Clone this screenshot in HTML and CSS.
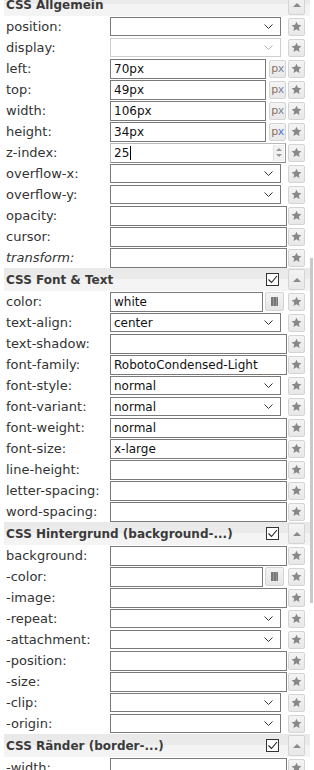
FILE: index.html
```html
<!DOCTYPE html>
<html lang="de">
<head>
<meta charset="UTF-8" />
<title>CSS Eigenschaften</title>
<link rel="stylesheet" href="styles.css">
</head>
<body>

<div class="panel">

  <!-- CSS Allgemein -->
  <section class="group first">
    <div class="group-head">
      <span class="title">CSS Allgemein</span>
      <button class="up"><svg width="8" height="4" viewBox="0 0 8 4"><polygon points="0,4 4,0 8,4" /></svg></button>
    </div>
    <div class="row"><span class="label">position:</span><div class="field sel"><span class="chev"></span></div><button class="star"></button></div>
    <div class="row"><span class="label">display:</span><div class="field sel disabled"><span class="chev"></span></div><button class="star"></button></div>
    <div class="row"><span class="label">left:</span><div class="field px">70px</div><span class="unit">p<i>x</i></span><button class="star"></button></div>
    <div class="row"><span class="label">top:</span><div class="field px">49px</div><span class="unit">p<i>x</i></span><button class="star"></button></div>
    <div class="row"><span class="label">width:</span><div class="field px">106px</div><span class="unit">p<i>x</i></span><button class="star"></button></div>
    <div class="row"><span class="label">height:</span><div class="field px">34px</div><span class="unit blue">p<i>x</i></span><button class="star"></button></div>
    <div class="row"><span class="label">z-index:</span><div class="field num focus">25<span class="caret"></span><span class="spin"><b class="a-up"></b><b class="a-down"></b></span></div><button class="star"></button></div>
    <div class="row"><span class="label">overflow-x:</span><div class="field sel"><span class="chev"></span></div><button class="star"></button></div>
    <div class="row"><span class="label">overflow-y:</span><div class="field sel"><span class="chev"></span></div><button class="star"></button></div>
    <div class="row"><span class="label">opacity:</span><div class="field"></div><button class="star"></button></div>
    <div class="row"><span class="label">cursor:</span><div class="field"></div><button class="star"></button></div>
    <div class="row"><span class="label em">transform:</span><div class="field"></div><button class="star"></button></div>
  </section>

  <!-- CSS Font & Text -->
  <section class="group">
    <div class="group-head">
      <span class="title">CSS Font &amp; Text</span>
      <span class="check"></span>
      <button class="up"><svg width="8" height="4" viewBox="0 0 8 4"><polygon points="0,4 4,0 8,4" /></svg></button>
    </div>
    <div class="row"><span class="label">color:</span><div class="field col">white</div><span class="picker"><b></b></span><button class="star"></button></div>
    <div class="row"><span class="label">text-align:</span><div class="field sel">center<span class="chev"></span></div><button class="star"></button></div>
    <div class="row"><span class="label">text-shadow:</span><div class="field"></div><button class="star"></button></div>
    <div class="row"><span class="label">font-family:</span><div class="field">RobotoCondensed-Light</div><button class="star"></button></div>
    <div class="row"><span class="label">font-style:</span><div class="field sel">normal<span class="chev"></span></div><button class="star"></button></div>
    <div class="row"><span class="label">font-variant:</span><div class="field sel">normal<span class="chev"></span></div><button class="star"></button></div>
    <div class="row"><span class="label">font-weight:</span><div class="field">normal</div><button class="star"></button></div>
    <div class="row"><span class="label">font-size:</span><div class="field">x-large</div><button class="star"></button></div>
    <div class="row"><span class="label">line-height:</span><div class="field"></div><button class="star"></button></div>
    <div class="row"><span class="label">letter-spacing:</span><div class="field"></div><button class="star"></button></div>
    <div class="row"><span class="label">word-spacing:</span><div class="field"></div><button class="star"></button></div>
  </section>

  <!-- CSS Hintergrund -->
  <section class="group">
    <div class="group-head">
      <span class="title">CSS Hintergrund (background-...)</span>
      <span class="check"></span>
      <button class="up"><svg width="8" height="4" viewBox="0 0 8 4"><polygon points="0,4 4,0 8,4" /></svg></button>
    </div>
    <div class="row"><span class="label">background:</span><div class="field"></div><button class="star"></button></div>
    <div class="row"><span class="label">-color:</span><div class="field col"></div><span class="picker"><b></b></span><button class="star"></button></div>
    <div class="row"><span class="label">-image:</span><div class="field"></div><button class="star"></button></div>
    <div class="row"><span class="label">-repeat:</span><div class="field sel"><span class="chev"></span></div><button class="star"></button></div>
    <div class="row"><span class="label">-attachment:</span><div class="field sel"><span class="chev"></span></div><button class="star"></button></div>
    <div class="row"><span class="label">-position:</span><div class="field"></div><button class="star"></button></div>
    <div class="row"><span class="label">-size:</span><div class="field"></div><button class="star"></button></div>
    <div class="row"><span class="label">-clip:</span><div class="field sel"><span class="chev"></span></div><button class="star"></button></div>
    <div class="row"><span class="label">-origin:</span><div class="field sel"><span class="chev"></span></div><button class="star"></button></div>
  </section>

  <!-- CSS Raender -->
  <section class="group">
    <div class="group-head">
      <span class="title">CSS Ränder (border-...)</span>
      <span class="check"></span>
      <button class="up"><svg width="8" height="4" viewBox="0 0 8 4"><polygon points="0,4 4,0 8,4" /></svg></button>
    </div>
    <div class="row"><span class="label">-width:</span><div class="field"></div><button class="star"></button></div>
  </section>

</div>

<div class="scroll-thumb"></div>

</body>
</html>
```

FILE: styles.css
```css
* {
  margin: 0; padding: 0; box-sizing: border-box;
}
html, body {
  height: 100%;
  width: 100%;
  overflow: hidden;
  background: #fff;
  font-family: 'DejaVu Sans', Verdana, sans-serif;
  color: #333;
}
.panel {
  margin-top: -7px;
  padding-left: 4px;
  width: 310px;
}
.group-head {
  height: 23px;
  display: flex;
  align-items: center;
  padding-left: 2px;
  background: linear-gradient(#e9e9e9 0%, #ebebeb 50%, #f3f3f3 50%, #f4f4f4 100%);
  font-size: 12px;
  font-weight: bold;
  color: #3a3a3a;
}
.group-head .title {
  flex: 1;
  white-space: nowrap;
  overflow: hidden;
}
.check {
  width: 13px;
  height: 13px;
  border: 1px solid #333;
  background: #fff url("data:image/svg+xml,%3Csvg xmlns='http://www.w3.org/2000/svg' width='11' height='11'%3E%3Cpolyline points='1.5,5.5 4.5,8.5 10,2' fill='none' stroke='%23222' stroke-width='1.1'/%3E%3C/svg%3E") no-repeat center;
  margin-right: 9px;
}
.up, .star {
  width: 17px;
  border: 1px solid #d4d4d4;
  border-radius: 2px;
  background: linear-gradient(#f4f4f4, #e8e8e8);
  display: flex;
  align-items: center;
  justify-content: center;
  margin-right: 5px;
  flex-shrink: 0;
}
.up {
  height: 21px;
  fill: #8a8a8a;
}
.star {
  height: 18px;
  margin-left: auto;
}
.star::before {
  content: "";
  width: 11px;
  height: 11px;
  background: url("data:image/svg+xml,%3Csvg xmlns='http://www.w3.org/2000/svg' width='11' height='11' viewBox='0 0 24 24'%3E%3Cpolygon points='12,1.5 15.2,8.4 22.8,9.2 17.1,14.3 18.7,21.8 12,18 5.3,21.8 6.9,14.3 1.2,9.2 8.8,8.4' fill='%23888'/%3E%3C/svg%3E") no-repeat center;
}
.row {
  height: 21px;
  display: flex;
  align-items: center;
  padding-left: 2px;
}
.label {
  width: 104px;
  font-size: 13px;
  color: #333;
  white-space: nowrap;
}
.label.em {
  font-style: italic;
}
.field {
  width: 177px;
  height: 20px;
  border: 1px solid #7a7a7a;
  background: #fff;
  font-size: 12px;
  color: #111;
  padding: 0 3px;
  display: flex;
  align-items: center;
  position: relative;
  white-space: nowrap;
}
.field.sel {
  width: 171px;
  height: 19px;
}
.field.sel.disabled {
  border-color: #cfcfcf;
}
.chev {
  position: absolute;
  right: 7px;
  top: 6px;
  width: 9px;
  height: 5px;
  background: url("data:image/svg+xml,%3Csvg xmlns='http://www.w3.org/2000/svg' width='9' height='5'%3E%3Cpolyline points='0.5,0.5 4.5,4.5 8.5,0.5' fill='none' stroke='%23333' stroke-width='1'/%3E%3C/svg%3E") no-repeat;
}
.disabled .chev {
  opacity: 0.35;
}
.field.px {
  width: 156px;
}
.unit {
  width: 17px;
  height: 18px;
  margin-left: 3px;
  border: 1px solid #d4d4d4;
  border-radius: 2px;
  background: linear-gradient(#f4f4f4, #e8e8e8);
  font-size: 11px;
  color: #8b6f5c;
  display: flex;
  align-items: center;
  justify-content: center;
  letter-spacing: -0.5px;
}
.unit i {
  font-style: normal;
  color: #7a8aa8;
}
.unit.blue i {
  color: #4a7ac8;
}
.field.num {
  width: 176px;
}
.field.focus {
  border-color: #b9b9b9;
  border-right-color: #9a9a9a;
  border-bottom-color: #8a8a8a;
}
.caret {
  width: 1px;
  height: 14px;
  background: #000;
  margin-left: 1px;
}
.spin {
  position: absolute;
  right: 1px;
  top: 1px;
  bottom: 1px;
  width: 11px;
  border-left: 1px solid #e0e0e0;
  background: #f2f2f2;
  display: flex;
  flex-direction: column;
  align-items: center;
  justify-content: center;
  gap: 3px;
}
.spin b {
  width: 0;
  height: 0;
  border-left: 3px solid transparent;
  border-right: 3px solid transparent;
}
.spin .a-up {
  border-bottom: 3px solid #999;
}
.spin .a-down {
  border-top: 3px solid #999;
}
.field.col {
  width: 153px;
}
.picker {
  width: 19px;
  height: 19px;
  margin-left: 2px;
  border: 1px solid #d4d4d4;
  border-radius: 2px;
  background: linear-gradient(#f4f4f4, #e6e6e6);
  display: flex;
  align-items: center;
  justify-content: center;
}
.picker b {
  width: 7px;
  height: 9px;
  background: repeating-linear-gradient(90deg, #777 0 2px, #999 2px 3px);
}
.scroll-thumb {
  position: fixed;
  right: 1px;
  top: 258px;
  width: 3px;
  height: 345px;
  background: #c9c9c9;
}
```
